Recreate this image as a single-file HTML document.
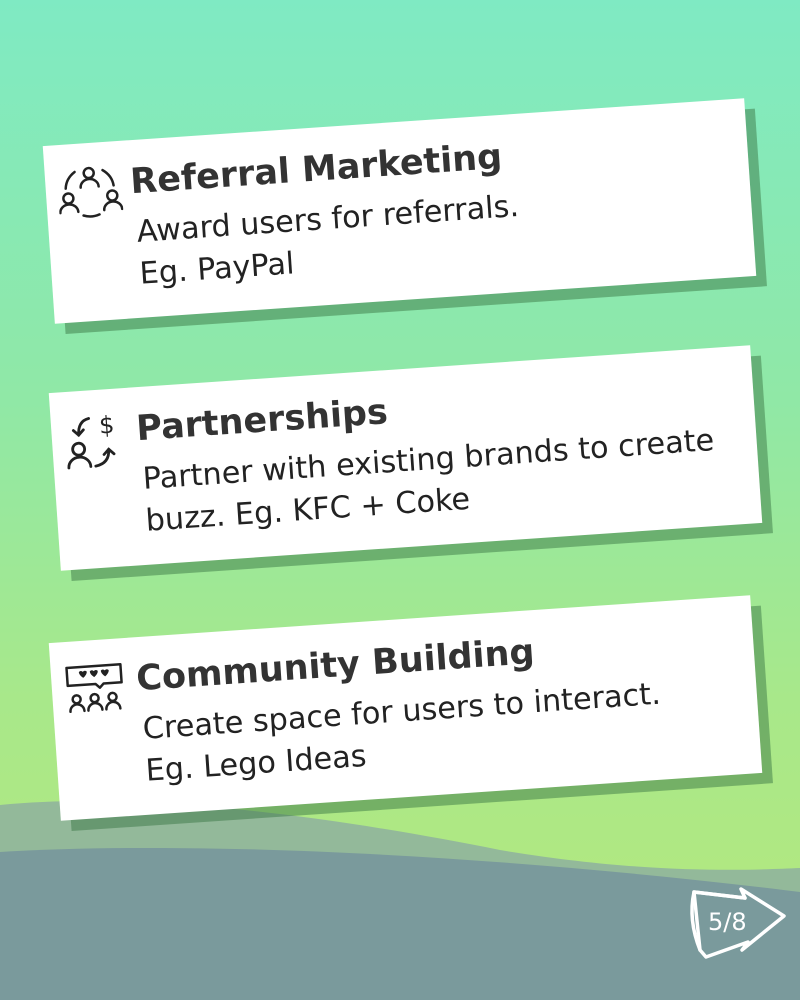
<!DOCTYPE html>
<html><head><style>
body{margin:0;width:800px;height:1000px;overflow:hidden;position:relative;font-family:"DejaVu Sans","Liberation Sans",sans-serif;background:linear-gradient(180deg,#7feac3 0%,#90e8a6 40%,#a8e88a 70%,#b6e87c 100%);}
.card{position:absolute;width:703px;height:178px;background:#fff;transform:rotate(-3.9deg);box-shadow:10px 11px 0 rgba(60,120,70,0.5);}
.card h2{position:absolute;left:85px;top:22px;margin:0;font-size:35px;font-weight:bold;color:#333;white-space:nowrap;}
.card p{position:absolute;left:88px;top:72px;margin:0;font-size:30.3px;line-height:42px;color:#222;white-space:nowrap;}
.card svg{position:absolute;left:12px;top:20px;}
</style></head><body>
<svg style="position:absolute;left:0;top:0" width="800" height="1000">
<path d="M0 805 C150 790 350 820 500 850 C650 875 750 870 800 868 L800 1000 L0 1000Z" fill="#93b99a"/>
<path d="M0 852 C200 840 500 855 800 892 L800 1000 L0 1000Z" fill="#7a9a9c"/>
<g fill="none" stroke="#fff" stroke-width="3.5" stroke-linejoin="round" stroke-linecap="round">
<path d="M694 892 L745 898 L741 889 L784 916 L742 950 L748 942 L706 957 L700 950 Z"/>
<path d="M694 892 Q688 920 700 950 M694 892 L745 898"/>
</g>
<text x="708" y="930" font-size="24" fill="#fff" font-family="DejaVu Sans">5/8</text>
</svg>
<div class="card" style="left:48px;top:122px">
<svg width="64" height="60" viewBox="0 0 64 60" fill="none" stroke="#222" stroke-width="2.5" stroke-linecap="round"><circle cx="32" cy="10" r="5"/><path d="M23 24 a9 8 0 0 1 18 0"/><circle cx="10" cy="34" r="5"/><path d="M1 48 a9 8 0 0 1 18 0"/><circle cx="54" cy="34" r="5"/><path d="M45 48 a9 8 0 0 1 18 0"/><path d="M18 8 Q9 14 8 24"/><path d="M46 8 Q55 14 56 24"/><path d="M24 52 Q32 55 40 52"/></svg>
<h2>Referral Marketing</h2><p>Award users for referrals.<br>Eg. PayPal</p></div>
<div class="card" style="left:54px;top:369px">
<svg width="64" height="64" viewBox="0 0 64 64" fill="none" stroke="#222" stroke-width="2.8" stroke-linecap="round"><circle cx="14" cy="38" r="6"/><path d="M3 56 a11 10 0 0 1 22 0"/><path d="M26 8 Q15 10 15 24 M10 19 L15 24 L20 19"/><path d="M30 56 Q44 54 44 40 M39 45 L44 40 L49 45"/><text x="36" y="24" font-size="24" fill="#222" stroke="none" font-family="DejaVu Sans">$</text></svg>
<h2>Partnerships</h2><p>Partner with existing brands to create<br>buzz. Eg. KFC + Coke</p></div>
<div class="card" style="left:54px;top:619px">
<svg width="64" height="60" viewBox="0 0 64 60" fill="none" stroke="#222" stroke-width="2.5" stroke-linecap="round" stroke-linejoin="round"><path d="M4 6 H58 V24 H40 L36 28 L32 24 H4 Z"/><g fill="#222" stroke="none"><path d="M16 11 a2.5 2.5 0 0 1 4 0 a2.5 2.5 0 0 1 4 0 q0 3 -4 6 q-4 -3 -4 -6z"/><path d="M27 11 a2.5 2.5 0 0 1 4 0 a2.5 2.5 0 0 1 4 0 q0 3 -4 6 q-4 -3 -4 -6z"/><path d="M38 11 a2.5 2.5 0 0 1 4 0 a2.5 2.5 0 0 1 4 0 q0 3 -4 6 q-4 -3 -4 -6z"/></g><circle cx="12" cy="38" r="4"/><path d="M5 50 a7 7 0 0 1 14 0"/><circle cx="30" cy="38" r="4"/><path d="M23 50 a7 7 0 0 1 14 0"/><circle cx="48" cy="38" r="4"/><path d="M41 50 a7 7 0 0 1 14 0"/></svg>
<h2>Community Building</h2><p>Create space for users to interact.<br>Eg. Lego Ideas</p></div>
</body></html>
